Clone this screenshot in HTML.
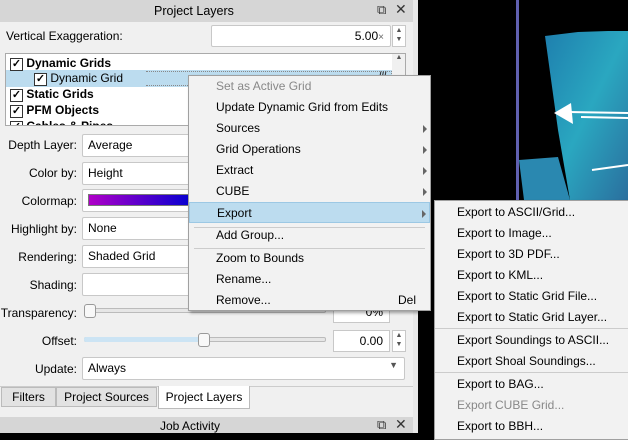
<!DOCTYPE html><html><head><style>
*{box-sizing:border-box;margin:0;padding:0}
body{width:628px;height:433px;overflow:hidden;background:#000;font-family:"Liberation Sans",sans-serif;font-size:12px;color:#000;position:relative}
.a{position:absolute}
.lbl{position:absolute;right:calc(628px - 77px);text-align:right;white-space:nowrap}
.combo{position:absolute;left:82px;width:323px;height:23px;background:#fff;border:1px solid #c8c8c8;border-radius:2px;padding:3px 5px}
.menu{position:absolute;background:#f2f2f2;border:1px solid #a0a0a0;box-shadow:2px 2px 3px rgba(0,0,0,.35)}
.mi{position:absolute;left:0;right:0;height:21px;line-height:21px;white-space:nowrap}
.arr{position:absolute;right:3px;top:7px;width:0;height:0;border-left:4px solid #666;border-top:4px solid transparent;border-bottom:4px solid transparent}
.sep{position:absolute;height:1px;background:#ccc}
.cb{display:inline-block;width:13px;height:13px;border:1px solid #333;background:#fff;font-size:11px;line-height:11px;text-align:center;font-weight:bold}
</style></head><body>
<div class="a" style="left:0;top:0;width:413px;height:433px;background:#f0f0f0"></div>
<div class="a" style="left:413px;top:0;width:5px;height:433px;background:#e8e8e8"></div>
<!-- viewport -->
<div class="a" style="left:516px;top:0;width:3px;height:200px;background:#6060b0"></div>
<svg class="a" style="left:418px;top:0" width="210" height="200">
<defs><linearGradient id="g" x1="0" y1="0" x2="1" y2="1"><stop offset="0" stop-color="#1e7fae"/><stop offset=".5" stop-color="#2aa7c0"/><stop offset="1" stop-color="#2a6f9e"/></linearGradient></defs>
<polygon points="127,36 160,32 190,31 210,31 210,200 152,200 140,130" fill="url(#g)"/>
<polygon points="101,160 140,157 152,200 106,200" fill="#2a88b0"/>
<polygon points="136,113 153,103 155,124" fill="#fff"/>
<path d="M150 112 L210 113 M163 117 L210 118 M174 170 L210 165" stroke="#fff" stroke-width="2"/>
</svg>
<!-- title -->
<div class="a" style="left:0;top:0;width:413px;height:22px;background:#d6d6d6"></div>
<div class="a" style="left:154px;top:4px;font-size:12.5px">Project Layers</div>
<div class="a" style="left:377px;top:2px;font-size:13px;color:#333">⧉</div>
<div class="a" style="left:395px;top:1px;font-size:14px;color:#333">✕</div>
<div class="a" style="left:6px;top:29px">Vertical Exaggeration:</div>
<div class="a" style="left:211px;top:25px;width:180px;height:22px;background:#fff;border:1px solid #c8c8c8;border-radius:2px;text-align:right;padding:3px 6px">5.00<span style="color:#666;font-size:10px">×</span></div>
<div class="a" style="left:392px;top:25px;width:14px;height:22px;background:#fff;border:1px solid #c8c8c8;font-size:7px;line-height:9px;text-align:center;color:#555">▲<br>▼</div>
<!-- tree -->
<div class="a" style="left:5px;top:53px;width:401px;height:73px;background:#fff;border:1px solid #aaa;overflow:hidden">
<div class="a" style="left:386px;top:0;width:14px;height:72px;background:#f0f0f0;font-size:7px;text-align:center;color:#555">▲</div>
<div class="a" style="left:0;top:16px;width:386px;height:17px;background:#bcdcef"></div>
<div class="a" style="left:140px;top:17px;width:246px;height:15px;border:1px dotted #888;border-left:none"></div>
<div class="a" style="left:4px;top:2px"><span class="cb">✓</span> <b>Dynamic Grids</b></div>
<div class="a" style="left:28px;top:17px"><span class="cb">✓</span> Dynamic Grid</div>
<div class="a" style="left:4px;top:33px"><span class="cb">✓</span> <b>Static Grids</b></div>
<div class="a" style="left:4px;top:49px"><span class="cb">✓</span> <b>PFM Objects</b></div>
<div class="a" style="left:4px;top:65px"><span class="cb">✓</span> <b>Cables &amp; Pipes</b></div>
<div class="a" style="left:373px;top:16px;font-size:9px;font-weight:bold;color:#333">///</div>
</div>
<!-- form -->
<div class="lbl" style="top:138px">Depth Layer:</div><div class="combo" style="top:134px">Average</div>
<div class="lbl" style="top:166px">Color by:</div><div class="combo" style="top:162px">Height</div>
<div class="lbl" style="top:194px">Colormap:</div><div class="combo" style="top:189px"><div style="width:300px;height:12px;margin-top:1px;border:1px solid #777;background:linear-gradient(90deg,#b000c8,#0000d0 35%,#00a0e0 60%,#40e0a0 80%,#e0e040)"></div></div>
<div class="lbl" style="top:222px">Highlight by:</div><div class="combo" style="top:217px">None</div>
<div class="lbl" style="top:250px">Rendering:</div><div class="combo" style="top:245px">Shaded Grid</div>
<div class="lbl" style="top:278px">Shading:</div><div class="combo" style="top:273px"></div>
<div class="lbl" style="top:306px">Transparency:</div>
<div class="a" style="left:84px;top:308px;width:242px;height:5px;background:#e6e6e6;border:1px solid #bbb;border-radius:2px"></div>
<div class="a" style="left:84px;top:304px;width:12px;height:14px;background:#f8f8f8;border:1px solid #999;border-radius:3px"></div>
<div class="a" style="left:333px;top:301px;width:57px;height:22px;background:#fff;border:1px solid #c8c8c8;text-align:right;padding:3px 6px">0%</div>
<div class="lbl" style="top:334px">Offset:</div>
<div class="a" style="left:84px;top:337px;width:242px;height:5px;background:#e6e6e6;border:1px solid #bbb;border-radius:2px"></div>
<div class="a" style="left:84px;top:337px;width:120px;height:5px;background:#cce4f4;border-radius:2px"></div>
<div class="a" style="left:198px;top:333px;width:12px;height:14px;background:#f8f8f8;border:1px solid #999;border-radius:3px"></div>
<div class="a" style="left:333px;top:330px;width:57px;height:22px;background:#fff;border:1px solid #c8c8c8;text-align:right;padding:3px 6px">0.00</div>
<div class="a" style="left:392px;top:330px;width:14px;height:22px;background:#fff;border:1px solid #c8c8c8;font-size:7px;line-height:9px;text-align:center;color:#555">▲<br>▼</div>
<div class="lbl" style="top:362px">Update:</div><div class="combo" style="top:357px">Always<span style="position:absolute;right:6px;top:2px;font-size:9px;color:#555">▼</span></div>
<!-- tabs -->
<div class="a" style="left:0;top:386px;width:413px;height:1px;background:#ccc"></div>
<div class="a" style="left:1px;top:387px;width:55px;height:20px;background:#e2e2e2;border:1px solid #bbb;text-align:center;line-height:18px">Filters</div>
<div class="a" style="left:56px;top:387px;width:101px;height:20px;background:#e2e2e2;border:1px solid #bbb;text-align:center;line-height:18px">Project Sources</div>
<div class="a" style="left:158px;top:386px;width:92px;height:23px;background:#fff;border:1px solid #bbb;border-top:none;text-align:center;line-height:22px">Project Layers</div>
<div class="a" style="left:0;top:417px;width:413px;height:16px;background:#d6d6d6"></div>
<div class="a" style="left:160px;top:419px">Job Activity</div>
<div class="a" style="left:377px;top:417px;font-size:13px;color:#333">⧉</div>
<div class="a" style="left:395px;top:416px;font-size:14px;color:#333">✕</div>
<!-- context menu -->
<div class="menu" style="left:188px;top:75px;width:243px;height:236px">
<div class="mi" style="top:0px;padding-left:27px;color:#888">Set as Active Grid</div>
<div class="mi" style="top:21px;padding-left:27px">Update Dynamic Grid from Edits</div>
<div class="mi" style="top:42px;padding-left:27px">Sources<i class="arr"></i></div>
<div class="mi" style="top:63px;padding-left:27px">Grid Operations<i class="arr"></i></div>
<div class="mi" style="top:84px;padding-left:27px">Extract<i class="arr"></i></div>
<div class="mi" style="top:105px;padding-left:27px">CUBE<i class="arr"></i></div>
<div class="mi" style="top:126px;padding-left:27px;background:#bcdcef;border:1px solid #9cc8e4">Export<i class="arr"></i></div>
<div class="sep" style="left:5px;right:5px;top:151px"></div>
<div class="mi" style="top:149px;padding-left:27px">Add Group...</div>
<div class="sep" style="left:5px;right:5px;top:172px"></div>
<div class="mi" style="top:172px;padding-left:27px">Zoom to Bounds</div>
<div class="mi" style="top:193px;padding-left:27px">Rename...</div>
<div class="mi" style="top:214px;padding-left:27px">Remove...<span style="position:absolute;right:14px">Del</span></div>
</div>
<div class="menu" style="left:434px;top:200px;width:200px;height:240px">
<div class="mi" style="top:1px;padding-left:22px">Export to ASCII/Grid...</div>
<div class="mi" style="top:22px;padding-left:22px">Export to Image...</div>
<div class="mi" style="top:43px;padding-left:22px">Export to 3D PDF...</div>
<div class="mi" style="top:64px;padding-left:22px">Export to KML...</div>
<div class="mi" style="top:85px;padding-left:22px">Export to Static Grid File...</div>
<div class="mi" style="top:106px;padding-left:22px">Export to Static Grid Layer...</div>
<div class="sep" style="left:0;right:0;top:127px"></div>
<div class="mi" style="top:129px;padding-left:22px">Export Soundings to ASCII...</div>
<div class="mi" style="top:150px;padding-left:22px">Export Shoal Soundings...</div>
<div class="sep" style="left:0;right:0;top:171px"></div>
<div class="mi" style="top:173px;padding-left:22px">Export to BAG...</div>
<div class="mi" style="top:194px;padding-left:22px;color:#888">Export CUBE Grid...</div>
<div class="mi" style="top:215px;padding-left:22px">Export to BBH...</div>
</div>
</body></html>
